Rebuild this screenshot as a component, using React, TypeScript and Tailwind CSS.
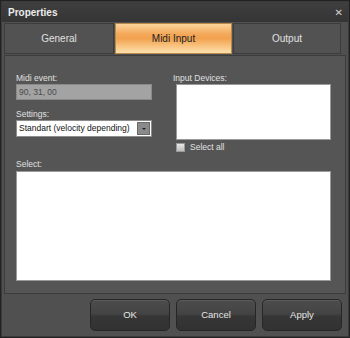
import React from "react";

function Btn({ label }: { label: string }) {
  return (
    <div className="w-[80px] h-[32px] rounded-[5px] border border-[#262626] bg-[linear-gradient(to_bottom,#4c4c4c_0%,#444_45%,#363636_55%,#323232_100%)] shadow-[inset_0_1px_0_#5c5c5c] flex items-center justify-center text-[9.5px] text-[#e6e6e6] [font-family:'Liberation_Sans',Arial,sans-serif]">
      {label}
    </div>
  );
}

export default function App() {
  const tabFont = "[font-family:'Liberation_Sans',Arial,sans-serif] text-[10px]";
  return (
    <div className="w-[350px] h-[338px] bg-[#222] p-[1px]">
      <div className="w-full h-full bg-[#505050] border border-[#3a3a3a] flex flex-col [font-family:'Liberation_Sans',Arial,sans-serif]">
        {/* title bar */}
        <div className="h-[20px] bg-[linear-gradient(to_bottom,#3f3f3f,#353535)] flex items-center justify-between pl-[6px] pr-[5px] shrink-0">
          <span className="text-[10px] text-[#ececec] font-semibold">Properties</span>
          <span className="text-[10px] text-[#d0d0d0] [font-family:'DejaVu_Sans',sans-serif]">✕</span>
        </div>
        {/* tabs */}
        <div className="flex px-[2px] pt-[1px] gap-[1px] h-[32px] shrink-0">
          <div className={`w-[110px] border border-[#3c3c3c] bg-[#525252] flex items-center justify-center text-[#e0e0e0] ${tabFont}`}>General</div>
          <div className={`w-[117px] border border-[#b78a4c] bg-[linear-gradient(to_bottom,#fbd39a_0%,#f4a85a_35%,#f2a24f_50%,#f8c27e_75%,#fde0b0_100%)] flex items-center justify-center text-[#222] ${tabFont}`}>Midi Input</div>
          <div className={`w-[108px] border border-[#3c3c3c] bg-[#525252] flex items-center justify-center text-[#e0e0e0] ${tabFont}`}>Output</div>
        </div>
        {/* panel */}
        <div className="mx-[2px] mt-[1px] h-[239px] border border-[#3c3c3c] bg-[#555555] shrink-0 px-[11px] pt-[16px] text-[8.5px] text-[#e0e0e0]">
          <div className="flex">
            <div className="w-[136px] flex flex-col">
              <div className="h-[12px] leading-[12px]">Midi event:</div>
              <div className="h-[16px] bg-[#a3a3a3] border border-[#8a8a8a] text-[#4a4a4a] pl-[2px] leading-[14px]">90, 31, 00</div>
              <div className="mt-[8px] h-[12px] leading-[12px]">Settings:</div>
              <div className="h-[17px] bg-white border border-[#8c8c8c] flex items-center text-[#111]">
                <span className="flex-1 pl-[2px] whitespace-nowrap overflow-hidden">Standart (velocity depending)</span>
                <span className="w-[13px] h-[13px] mr-[1px] bg-[#8a8a8a] border border-[#6a6a6a] flex items-center justify-center">
                  <span className="block w-0 h-0 border-l-[2px] border-r-[2px] border-t-[2px] border-l-transparent border-r-transparent border-t-[#222]" />
                </span>
              </div>
            </div>
            <div className="ml-[24px] flex flex-col">
              <div className="h-[12px] leading-[12px] -ml-[3px]">Input Devices:</div>
              <div className="w-[155px] h-[56px] bg-white border border-[#9a9a9a]" />
              <div className="flex items-center mt-[3px] h-[9px]">
                <span className="w-[9px] h-[9px] bg-[linear-gradient(to_bottom,#e8e8e8,#bdbdbd)] border border-[#9a9a9a]" />
                <span className="ml-[5px] leading-[9px]">Select all</span>
              </div>
            </div>
          </div>
          <div className="mt-[6px] h-[12px] leading-[12px]">Select:</div>
          <div className="mt-[1px] w-[315px] h-[110px] bg-white border border-[#9a9a9a]" />
        </div>
        {/* buttons */}
        <div className="flex justify-end gap-[6px] pr-[6px] pt-[5px]">
          <Btn label="OK" />
          <Btn label="Cancel" />
          <Btn label="Apply" />
        </div>
      </div>
    </div>
  );
}
